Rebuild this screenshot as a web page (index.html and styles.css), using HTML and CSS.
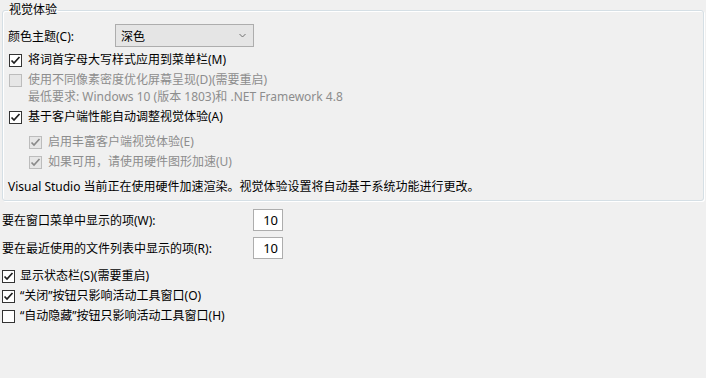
FILE: index.html
```
<!DOCTYPE html>
<html lang="zh-CN">
<head>
  <meta charset="UTF-8">
  <title>选项 - 常规</title>
  <link rel="stylesheet" href="styles.css">
</head>
<body>
  <div class="options-page">
    <fieldset class="group">
      <legend class="group-title">视觉体验</legend>

      <div class="theme-row">
        <span class="theme-label">颜色主题(C):</span>
        <div class="combo">
          <span>深色</span>
          <svg class="chevron" width="7" height="5" viewBox="0 0 7 5"><path d="M0.5 1 L3.5 4 L6.5 1" fill="none" stroke="#707070" stroke-width="1"/></svg>
        </div>
      </div>

      <div class="check caps-row">
        <span class="box"><svg width="11" height="11" viewBox="0 0 11 11"><path d="M1.5 5.5 L4 8 L9.5 2" fill="none" stroke="#1e1e1e" stroke-width="1.7"/></svg></span>
        <span>将词首字母大写样式应用到菜单栏(M)</span>
      </div>

      <div class="check disabled">
        <span class="box"></span>
        <span>使用不同像素密度优化屏幕呈现(D)(需要重启)</span>
      </div>
      <div class="note">最低要求: Windows 10 (版本 1803)和 .NET Framework 4.8</div>

      <div class="check auto-row">
        <span class="box"><svg width="11" height="11" viewBox="0 0 11 11"><path d="M1.5 5.5 L4 8 L9.5 2" fill="none" stroke="#1e1e1e" stroke-width="1.7"/></svg></span>
        <span>基于客户端性能自动调整视觉体验(A)</span>
      </div>

      <div class="sub-checks">
        <div class="check disabled sub">
          <span class="box"><svg width="11" height="11" viewBox="0 0 11 11"><path d="M1.5 5.5 L4 8 L9.5 2" fill="none" stroke="#8a8a8a" stroke-width="1.7"/></svg></span>
          <span>启用丰富客户端视觉体验(E)</span>
        </div>
        <div class="check disabled sub">
          <span class="box"><svg width="11" height="11" viewBox="0 0 11 11"><path d="M1.5 5.5 L4 8 L9.5 2" fill="none" stroke="#8a8a8a" stroke-width="1.7"/></svg></span>
          <span>如果可用，请使用硬件图形加速(U)</span>
        </div>
      </div>

      <p class="status">Visual Studio 当前正在使用硬件加速渲染。视觉体验设置将自动基于系统功能进行更改。</p>
    </fieldset>

    <div class="count-row first">
      <span class="count-label">要在窗口菜单中显示的项(W):</span>
      <span class="count-box">10</span>
    </div>
    <div class="count-row">
      <span class="count-label">要在最近使用的文件列表中显示的项(R):</span>
      <span class="count-box">10</span>
    </div>

    <div class="bottom-checks">
      <div class="check">
        <span class="box"><svg width="11" height="11" viewBox="0 0 11 11"><path d="M1.5 5.5 L4 8 L9.5 2" fill="none" stroke="#1e1e1e" stroke-width="1.7"/></svg></span>
        <span>显示状态栏(S)(需要重启)</span>
      </div>
      <div class="check">
        <span class="box"><svg width="11" height="11" viewBox="0 0 11 11"><path d="M1.5 5.5 L4 8 L9.5 2" fill="none" stroke="#1e1e1e" stroke-width="1.7"/></svg></span>
        <span>“关闭”按钮只影响活动工具窗口(O)</span>
      </div>
      <div class="check">
        <span class="box"></span>
        <span>“自动隐藏”按钮只影响活动工具窗口(H)</span>
      </div>
    </div>
  </div>
</body>
</html>
```

FILE: styles.css
```
* {
  box-sizing: border-box;
}

body {
  margin: 0;
  background-color: #f0f0f0;
  color: #000;
  font-family: "Noto Sans", "Noto Sans CJK SC", sans-serif;
  font-size: 12px;
}

.options-page {
  width: 706px;
  height: 378px;
  overflow: hidden;
}

/* group box */
.group {
  margin: 2px 0 0 2px;
  width: 702px;
  min-inline-size: 0;
  padding: 6px 5px 3px 5px;
  border: 1px solid #d5dfe5;
  border-radius: 3px;
  box-shadow: 1px 1px 0 #fff, inset 1px 1px 0 #fff;
}
.group-title {
  padding: 0 1px;
  line-height: 16px;
  height: 16px;
}

.theme-row {
  display: flex;
  align-items: center;
  height: 23px;
}
.theme-label {
  width: 107px;
}
.combo {
  display: flex;
  align-items: center;
  justify-content: space-between;
  width: 139px;
  height: 23px;
  padding: 0 7px 0 5px;
  background-color: #e5e5e5;
  border: 1px solid #adadad;
}

/* checkboxes */
.check {
  display: flex;
  align-items: center;
  gap: 6px;
  height: 20px;
  line-height: 20px;
}
.box {
  display: flex;
  align-items: center;
  justify-content: center;
  width: 13px;
  height: 13px;
  background-color: #fff;
  border: 1px solid #333;
}
.group > .check {
  margin-left: 1px;
}
.caps-row {
  margin-top: 3px;
}
.check.disabled {
  color: #8d8d8d;
}
.check.disabled .box {
  background-color: #e6e6e6;
  border-color: #bcbcbc;
}

.note {
  height: 14px;
  line-height: 14px;
  padding-left: 20px;
  color: #8d8d8d;
}
.auto-row {
  margin-top: 3px;
}
.sub-checks {
  margin: 5px 0 5px 21px;
}
.status {
  margin: 0;
  height: 20px;
  line-height: 20px;
}

/* counts below the group */
.count-row {
  display: flex;
  align-items: center;
  height: 22px;
  padding-left: 2px;
  margin-top: 6px;
}
.count-row.first {
  margin-top: 8px;
}
.count-label {
  width: 251px;
}
.count-box {
  width: 30px;
  height: 22px;
  line-height: 20px;
  padding-right: 4px;
  text-align: right;
  font-size: 13px;
  background-color: #fff;
  border: 1px solid #adadad;
}

.bottom-checks {
  margin-top: 7px;
  padding-left: 2px;
}
.bottom-checks .check {
  gap: 5px;
}
```
